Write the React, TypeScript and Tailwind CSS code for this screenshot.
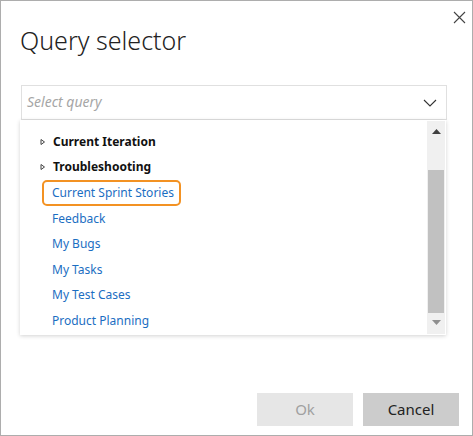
const font = { fontFamily: '"Noto Sans", "Open Sans", sans-serif' }

function TreeArrow() {
  return (
    <svg width="6" height="8" viewBox="0 0 6 8" className="shrink-0">
      <path d="M1 1.5 L4.5 4 L1 6.5 Z" fill="none" stroke="#444" strokeWidth="1" />
    </svg>
  )
}

const folders = ['Current Iteration', 'Troubleshooting']
const queries = ['Current Sprint Stories', 'Feedback', 'My Bugs', 'My Tasks', 'My Test Cases', 'Product Planning']

export default function App() {
  return (
    <div
      className="flex h-[436px] w-[473px] flex-col border border-[#adadad] bg-white"
      style={font}
    >
      {/* header */}
      <div className="flex items-start justify-between">
        <h1 className="ml-[19px] mt-[22px] text-[25px] font-light leading-[34px] text-[#222]">
          Query selector
        </h1>
        <button className="mr-[6px] mt-[9px] flex h-[14px] w-[14px] items-center justify-center">
          <svg width="13" height="13" viewBox="0 0 13 13">
            <path d="M1 1 L12 12 M12 1 L1 12" stroke="#444" strokeWidth="1.1" />
          </svg>
        </button>
      </div>

      {/* select */}
      <div className="ml-[20px] mt-[28px] flex h-[35px] w-[426px] items-center justify-between border border-[#e0e0e0] pb-[3px] pl-[5px] pr-[9px]">
        <span className="text-[14px] italic text-[#a6a6a6]">Select query</span>
        <svg width="14" height="8" viewBox="0 0 14 8" className="mt-[3px]">
          <path d="M1 1 L7 7 L13 1" fill="none" stroke="#333" strokeWidth="1.1" />
        </svg>
      </div>

      {/* dropdown list */}
      <div className="ml-[19px] flex h-[215px] w-[426px] bg-white shadow-[0_1px_4px_rgba(0,0,0,0.18)]">
        <div className="flex flex-1 flex-col pt-[9px]">
          {folders.map((f) => (
            <div key={f} className="flex h-[25.6px] items-center gap-[6px] pl-[20px]">
              <TreeArrow />
              <span className="ml-[1px] text-[12px] font-bold text-[#111]">{f}</span>
            </div>
          ))}
          {queries.map((q, i) => (
            <div key={q} className="flex h-[25.6px] items-center pl-[32px]">
              <span
                className={
                  i === 0
                    ? '-ml-[10px] rounded-[5px] border-2 border-[#f39223] pl-[8px] pr-[5px] py-[2px] text-[12px] text-[#1b6ec2]'
                    : 'text-[12px] text-[#1b6ec2]'
                }
              >
                {q}
              </span>
            </div>
          ))}
        </div>
        {/* scrollbar */}
        <div className="my-[1px] mr-[1px] flex w-[18px] flex-col bg-[#f0f0f0]">
          <div className="flex h-[49px] justify-center pt-[8px]">
            <svg width="9" height="5" viewBox="0 0 9 5">
              <path d="M0 5 L4.5 0 L9 5 Z" fill="#404040" />
            </svg>
          </div>
          <div className="mx-[1px] h-[143px] bg-[#c1c1c1]" />
          <div className="flex flex-1 justify-center pt-[7px]">
            <svg width="9" height="5" viewBox="0 0 9 5">
              <path d="M0 0 L4.5 5 L9 0 Z" fill="#8f8f8f" />
            </svg>
          </div>
        </div>
      </div>

      {/* buttons */}
      <div className="mt-auto mb-[9px] mr-[13px] flex justify-end gap-[10px]">
        <button className="h-[33px] w-[96px] bg-[#e6e6e6] text-[15px] text-[#a0a0a0]">Ok</button>
        <button className="h-[33px] w-[96px] bg-[#cccccc] text-[15px] text-[#222]">Cancel</button>
      </div>
    </div>
  )
}
